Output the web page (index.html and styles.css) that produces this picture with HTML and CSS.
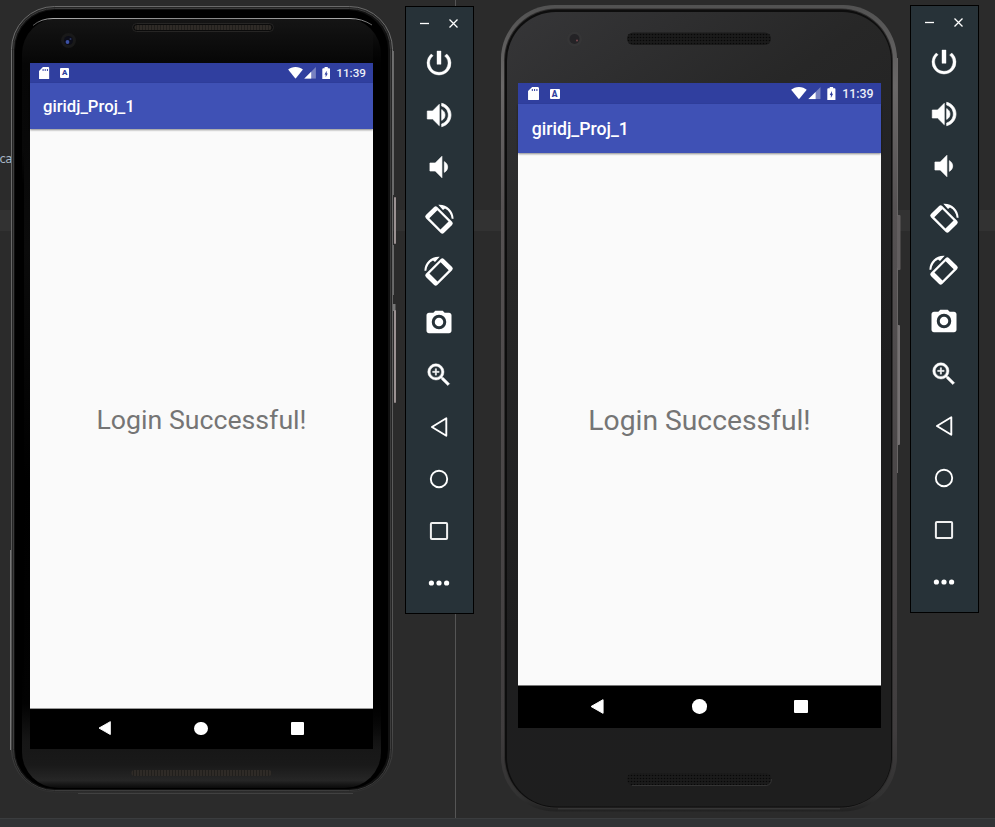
FILE: index.html
```html
<!DOCTYPE html>
<html lang="en">
<head>
<meta charset="utf-8">
<title>giridj_Proj_1</title>
<link rel="stylesheet" href="styles.css">
</head>
<body>
<svg class="defs" aria-hidden="true">
  <defs>
    <pattern id="mesh" width="3" height="3" patternUnits="userSpaceOnUse"><rect width="3" height="3" fill="#1b1b1b"/><circle cx="1.5" cy="1.5" r=".8" fill="#080808"/></pattern>
    <pattern id="mesh-warm" width="3" height="3" patternUnits="userSpaceOnUse"><rect width="3" height="3" fill="#2f2b27"/><rect x="1" width="1" height="3" fill="#211f1c"/></pattern>
    <linearGradient id="faceA" x1="0" y1="0" x2="0" y2="1">
      <stop offset="0" stop-color="#151515"/><stop offset=".06" stop-color="#060606"/><stop offset=".3" stop-color="#0b0b0b"/><stop offset=".6" stop-color="#000"/><stop offset=".89" stop-color="#020202"/><stop offset=".94" stop-color="#161616"/><stop offset=".97" stop-color="#191919"/><stop offset=".99" stop-color="#262626"/><stop offset="1" stop-color="#0a0a0a"/>
    </linearGradient>
    <linearGradient id="sideA" x1="0" y1="0" x2="0" y2="1">
      <stop offset="0" stop-color="#000" stop-opacity="0"/><stop offset=".06" stop-color="#000"/><stop offset=".92" stop-color="#000"/><stop offset="1" stop-color="#000" stop-opacity="0"/>
    </linearGradient>
    <linearGradient id="faceB" x1="0" y1="0" x2=".35" y2="1">
      <stop offset="0" stop-color="#363638"/><stop offset=".3" stop-color="#272727"/><stop offset=".7" stop-color="#1e1e1f"/><stop offset="1" stop-color="#1e1e1e"/>
    </linearGradient>
    <linearGradient id="rimB" x1="0" y1="0" x2="0" y2="1">
      <stop offset="0" stop-color="#525252"/><stop offset=".1" stop-color="#6a6868"/><stop offset=".25" stop-color="#565253"/><stop offset=".9" stop-color="#403d3e"/><stop offset=".98" stop-color="#323232"/><stop offset="1" stop-color="#222"/>
    </linearGradient>
    <linearGradient id="rimA" x1="0" y1="0" x2="0" y2="1">
      <stop offset="0" stop-color="#6a6a6a"/><stop offset=".06" stop-color="#707070"/><stop offset=".9" stop-color="#505050"/><stop offset="1" stop-color="#303030"/>
    </linearGradient>
    <linearGradient id="glint" x1="0" y1="0" x2="1" y2="0">
      <stop offset="0" stop-color="#555"/><stop offset=".05" stop-color="#aaa"/><stop offset=".5" stop-color="#868686"/><stop offset=".94" stop-color="#aaa"/><stop offset="1" stop-color="#666"/>
    </linearGradient>
    <symbol id="sd" viewBox="0 0 16 20"><path fill="#fff" fill-rule="evenodd" d="M14 0H6L0 6v12c0 1.1.9 2 2 2h12c1.1 0 2-.9 2-2V2c0-1.1-.9-2-2-2zM5.500 3h1.500v3h-1.500zM8.800 3h1.500v3h-1.500zM12.200 3h1.500v3h-1.500z"/></symbol>
    <symbol id="wifi" viewBox="0 0 24 19"><path fill="#fff" d="M12 19 24 4.2C21 1.9 16.9 0 12 0S3 1.9 0 4.2z"/></symbol>
    <symbol id="signal" viewBox="0 0 20 20"><path fill="#fff" fill-opacity=".35" d="M0 20h20V0z"/><path fill="#fff" d="M0 20h12V8z"/></symbol>
    <symbol id="battery" viewBox="0 0 12 20"><path fill="#fff" fill-rule="evenodd" d="M10.700 2H8.500V0h-5v2H1.300C.6 2 0 2.600 0 3.300v15.400c0 .7.6 1.300 1.300 1.300h9.400c.7 0 1.300-.6 1.300-1.300V3.300C12 2.600 11.400 2 10.700 2zM5.200 16v-4.200H3.500L6.800 5.800V10h1.700z"/></symbol>
    <symbol id="nav-back" viewBox="0 0 16 18"><path fill="#fff" d="M15.2.8v16.4L.8 9z" stroke="#fff" stroke-width="1.2" stroke-linejoin="round"/></symbol>
    <symbol id="power" viewBox="0 0 24 24"><path d="M13.5 3h-3v10h3zm4.3 2.200-1.600 1.600A6.900 6.900 0 0 1 12 19 7 7 0 0 1 7.600 6.600L6.200 5.200A9 9 0 1 0 17.800 5.200z" stroke="#fff" stroke-width=".3"/></symbol>
    <symbol id="vol-up" viewBox="0 0 24 24"><path stroke="#fff" stroke-width=".5" d="M3.200 9v6h4l5 5V4l-5 5h-4zm13.300 3c0-1.770-1.020-3.290-2.500-4.030v8.050c1.480-.73 2.500-2.250 2.500-4.020zM14 3.230v2.060c2.890.86 5 3.540 5 6.710s-2.110 5.850-5 6.710v2.060c4.010-.91 7-4.490 7-8.770s-2.990-7.860-7-8.770z"/></symbol>
    <symbol id="vol-down" viewBox="0 0 24 24"><path stroke="#fff" stroke-width=".5" d="M18.500 12c0-1.770-1.020-3.290-2.500-4.030v8.050c1.480-.73 2.500-2.250 2.500-4.020zM5.200 9v6h4l5 5V4l-5 5h-4z"/></symbol>
    <symbol id="rotate" viewBox="0 0 32 32"><path fill-rule="evenodd" transform="rotate(45 16 17)" d="M5.500 9h21a2.200 2.200 0 0 1 2.200 2.200v11.600a2.200 2.200 0 0 1-2.200 2.200h-21a2.200 2.200 0 0 1-2.200-2.200V11.200A2.200 2.200 0 0 1 5.500 9zM8 11.300v11.400h15.800V11.300z"/><path d="M15.300 1.800C23.500 1.200 30.300 7 30.600 15.800h-1.900C28.200 11.200 26 7.500 22 5.500l-2 1.600z"/></symbol>
    <symbol id="camera" viewBox="0 0 24 24"><circle cx="12" cy="12" r="3.400"/><path d="M9 3 7.500 4.500H4c-1.100 0-2 .9-2 2V19c0 1.100.9 2 2 2h16c1.100 0 2-.9 2-2V6.500c0-1.100-.9-2-2-2h-3.500L15 3H9zm3 14.800a5.800 5.800 0 1 1 0-11.600 5.800 5.800 0 0 1 0 11.600z" fill-rule="evenodd"/></symbol>
    <symbol id="zoom" viewBox="0 0 24 24"><path d="M15.500 14h-.79l-.28-.27A6.470 6.470 0 0 0 16 9.500 6.500 6.500 0 1 0 9.500 16c1.610 0 3.090-.59 4.230-1.570l.27.28v.79l5 4.990L20.490 19l-4.990-5zm-6 0C7.010 14 5 11.990 5 9.500S7.010 5 9.500 5 14 7.010 14 9.500 11.990 14 9.500 14zm2.600-4H10v2.100H9V10H6.900V9H9V6.900h1V9h2.100z" stroke="#fff" stroke-width=".35"/></symbol>
    <symbol id="back" viewBox="0 0 32 32"><path d="M23.300 7.200v17.600L8.900 16z" fill="none" stroke="#fff" stroke-width="1.900" stroke-linejoin="round"/></symbol>
    <symbol id="home" viewBox="0 0 32 32"><circle cx="16" cy="16" r="8.200" fill="none" stroke="#fff" stroke-width="1.900"/></symbol>
    <symbol id="recent" viewBox="0 0 32 32"><rect x="7.900" y="7.900" width="16.200" height="16.200" rx="1" fill="none" stroke="#f0f0f0" stroke-width="2"/></symbol>
    <symbol id="more" viewBox="0 0 32 32"><circle cx="8.400" cy="16" r="2.600"/><circle cx="16" cy="16" r="2.600"/><circle cx="23.600" cy="16" r="2.600"/></symbol>
  </defs>
</svg>

<main class="editor">
  <div class="caret-row"></div>
  <div class="guide"></div>
  <code class="code-bit">ca</code>
  <footer class="footer"></footer>

  <section class="phone phone-a">
    <svg class="shell" viewBox="10 5 388 790">
      <path d="M10.500 550v200" stroke="#777"/>
      <path d="M393.500 51v144M393.500 245v50" stroke="#6a6a6a"/>
      <rect x="394" y="197" width="2" height="47" rx="1" fill="#9b9192"/>
      <rect x="393" y="304" width="2.500" height="7" fill="#777"/>
      <rect x="394" y="310" width="2" height="93" rx="1" fill="#9b9192"/>
      <rect x="11.500" y="6.500" width="381" height="785.500" rx="43" fill="#252525" stroke="url(#rimA)"/>
      <rect x="13.500" y="8.500" width="377" height="782" rx="41" fill="#111" stroke="#3c3c3c"/>
      <rect x="15" y="10" width="373" height="779" rx="40" fill="#000"/>
      <rect x="22" y="18" width="359" height="770" rx="36" fill="url(#faceA)"/>
      <path d="M16 150h8v560h-8z" fill="url(#sideA)"/>
      <path d="M33 25.500Q41 18.500 53 18.500H350Q362 18.500 372 25" fill="none" stroke="url(#glint)"/>
      <path d="M373 30h15v720h-15z" fill="url(#sideA)"/>
      <circle cx="68.500" cy="40.500" r="7.500" fill="#191919"/><circle cx="68.500" cy="40.500" r="4.500" fill="#0c0d18"/>
      <circle cx="67.500" cy="42" r="1.900" fill="#3c51a5"/><circle cx="70.500" cy="39" r="1" fill="#29335f"/>
      <rect x="132.500" y="23.500" width="141" height="8" rx="4" fill="#0b0b0b" stroke="#262524"/>
      <rect x="134.500" y="25" width="137" height="5" rx="2.500" fill="url(#mesh-warm)"/>
      <rect x="131.500" y="770" width="140" height="6" rx="3" fill="url(#mesh-warm)"/>
      <path d="M78 793.500h275" stroke="#414141"/>
    </svg>
    <div class="screen">
      <div class="status">
        <svg class="i-sd"><use href="#sd"/></svg><span class="i-a">A</span>
        <svg class="i-wifi"><use href="#wifi"/></svg><svg class="i-signal"><use href="#signal"/></svg><svg class="i-battery"><use href="#battery"/></svg><span class="time">11:39</span>
      </div>
      <header class="appbar">giridj_Proj_1</header>
      <div class="content">Login Successful!</div>
      <nav class="nav"><svg class="n-back"><use href="#nav-back"/></svg><i class="n-home"></i><i class="n-recent"></i></nav>
    </div>
  </section>

  <aside class="tools tools-a">
    <div class="win"><svg viewBox="0 0 67 30"><path d="M14 16.500h9"/><path d="m43.500 12.500 8 8m0-8-8 8"/></svg></div>
    <svg class="t"><use href="#power"/></svg>
    <svg class="t"><use href="#vol-up"/></svg>
    <svg class="t"><use href="#vol-down"/></svg>
    <svg class="t"><use href="#rotate"/></svg>
    <svg class="t flip"><use href="#rotate"/></svg>
    <svg class="t cam"><use href="#camera"/></svg>
    <svg class="t mag"><use href="#zoom"/></svg>
    <svg class="t"><use href="#back"/></svg>
    <svg class="t"><use href="#home"/></svg>
    <svg class="t"><use href="#recent"/></svg>
    <svg class="t"><use href="#more"/></svg>
  </aside>

  <section class="phone phone-b">
    <svg class="shell" viewBox="500 4 402 810">
      <rect x="897" y="215" width="3.500" height="55" rx="1" fill="#625e5f"/>
      <rect x="897" y="325" width="3" height="120" rx="1" fill="#757172"/>
      <path d="M897.500 58v158M897.500 268v205" stroke="#686565"/>
      <rect x="501" y="5" width="396" height="806.500" rx="54" fill="url(#rimB)"/>
      <rect x="504" y="8.500" width="389" height="800" rx="52" fill="#2e2d2d"/>
      <rect x="505" y="9.500" width="387" height="798" rx="51" fill="#0d0d0d"/>
      <rect x="507" y="12" width="384" height="794.500" rx="49" fill="url(#faceB)"/>
      <path d="M558 808.800H840" stroke="#3c3c3c"/>
      <circle cx="574.500" cy="39" r="7.500" fill="#353536"/><circle cx="574.500" cy="39" r="5" fill="#242326"/><circle cx="577" cy="40.500" r="1" fill="#7b4a50"/>
      <rect x="627" y="32.500" width="144" height="12.500" rx="6" fill="url(#mesh)"/>
      <rect x="627" y="773" width="144.500" height="12.500" rx="6" fill="url(#mesh)"/>
      <path d="M632 785.500H766Q771.500 785 771.500 779" fill="none" stroke="#333"/>
    </svg>
    <div class="screen">
      <div class="status">
        <svg class="i-sd"><use href="#sd"/></svg><span class="i-a">A</span>
        <svg class="i-wifi"><use href="#wifi"/></svg><svg class="i-signal"><use href="#signal"/></svg><svg class="i-battery"><use href="#battery"/></svg><span class="time">11:39</span>
      </div>
      <header class="appbar">giridj_Proj_1</header>
      <div class="content">Login Successful!</div>
      <nav class="nav"><svg class="n-back"><use href="#nav-back"/></svg><i class="n-home"></i><i class="n-recent"></i></nav>
    </div>
  </section>

  <aside class="tools tools-b">
    <div class="win"><svg viewBox="0 0 67 30"><path d="M14 16.500h9"/><path d="m43.500 12.500 8 8m0-8-8 8"/></svg></div>
    <svg class="t"><use href="#power"/></svg>
    <svg class="t"><use href="#vol-up"/></svg>
    <svg class="t"><use href="#vol-down"/></svg>
    <svg class="t"><use href="#rotate"/></svg>
    <svg class="t flip"><use href="#rotate"/></svg>
    <svg class="t cam"><use href="#camera"/></svg>
    <svg class="t mag"><use href="#zoom"/></svg>
    <svg class="t"><use href="#back"/></svg>
    <svg class="t"><use href="#home"/></svg>
    <svg class="t"><use href="#recent"/></svg>
    <svg class="t"><use href="#more"/></svg>
  </aside>
</main>
</body>
</html>
```
FILE: styles.css
```css
* { box-sizing: border-box; }
body { margin: 0; background: #2b2b2b; font-family: Roboto, sans-serif; }
svg { display: block; }
.defs { position: absolute; width: 0; height: 0; }

.editor { position: relative; height: 827px; overflow: hidden; display: flex; flex-direction: column; }
.caret-row { margin-top: 210px; height: 21px; background: #323232; }
.footer { margin-top: auto; height: 9px; background: #313335; border-top: 1px solid #3a3c3e; }
.guide { position: absolute; left: 455px; top: 0; width: 1px; height: 818px; background: #555; }
.code-bit { position: absolute; left: -1px; top: 151px; font: 12px/16px "DejaVu Sans Mono", monospace; letter-spacing: -1px; color: #a9b7c6; }

/* --u is one density-independent pixel of the device */
.phone { position: absolute; }
.phone-a { --u: .8345px; left: 10px; top: 5px; width: 388px; height: 790px; padding: 58px 0 0 20px; }
.phone-b { --u: .8832px; left: 500px; top: 4px; width: 402px; height: 810px; padding: 79px 0 0 18px; }
.shell { position: absolute; inset: 0; width: 100%; height: 100%; }
.screen { position: relative; display: flex; flex-direction: column; background: #fafafa; }
.phone-a .screen { width: 343px; height: 686px; }
.phone-b .screen { width: 363px; height: 645px; }

.status { flex: none; height: calc(24 * var(--u)); background: #303f9f; display: flex; align-items: center; padding: 0 calc(8.500 * var(--u)) 0 calc(11.300 * var(--u)); color: #fff; }
.i-sd { width: calc(12.500 * var(--u)); height: calc(15.500 * var(--u)); }
.i-a { width: calc(11.500 * var(--u)); height: calc(11.500 * var(--u)); margin-left: calc(12 * var(--u)); background: #fff; color: #303f9f; border-radius: 1px; font-size: calc(9.500 * var(--u)); line-height: calc(11.500 * var(--u)); font-weight: 900; text-align: center; }
.i-wifi { width: calc(18 * var(--u)); height: calc(14 * var(--u)); margin-left: auto; }
.i-signal { width: calc(14.500 * var(--u)); height: calc(14 * var(--u)); margin-left: calc(1.500 * var(--u)); }
.i-battery { width: calc(10 * var(--u)); height: calc(15.500 * var(--u)); margin-left: calc(7 * var(--u)); }
.time { margin-left: calc(7 * var(--u)); font-size: calc(14 * var(--u)); font-weight: 500; color: #eceef7; }

.appbar { flex: none; position: relative; height: calc(55.500 * var(--u)); padding: calc(1 * var(--u)) 0 0 calc(15.500 * var(--u)); display: flex; align-items: center; background: #3f51b5; color: #fff; font-size: calc(20 * var(--u)); font-weight: 500; box-shadow: 0 1px 2px rgba(0, 0, 0, .45); }
.content { flex: 1; display: flex; align-items: center; justify-content: center; padding-top: 2px; color: #757575; font-size: calc(32 * var(--u)); }
.nav { flex: none; height: calc(48 * var(--u)); background: #000; display: flex; align-items: center; justify-content: center; gap: calc(99.500 * var(--u)); padding: 0 1px 1px 0; }
.phone-b .nav { border-top: 1px solid #777; height: 43px; }
.phone-a .nav { border-top: 1px solid #999; height: 41px; }
.n-back { width: calc(16 * var(--u)); height: calc(17 * var(--u)); }
.n-home { width: calc(16.500 * var(--u)); height: calc(16.500 * var(--u)); border-radius: 50%; background: #fff; }
.n-recent { width: calc(15.500 * var(--u)); height: calc(15.500 * var(--u)); border-radius: 1px; background: #fff; }

.tools { position: absolute; width: 69px; height: 608px; border: 1px solid #000; background: #273238; display: grid; grid-template: 30px repeat(11, 52px) / 66px; place-items: center; fill: #fff; }
.tools-a { left: 405px; top: 6px; }
.tools-b { left: 910px; top: 5px; }
.win { width: 66px; height: 30px; }
.win svg { width: 67px; height: 30px; }
.win path { fill: none; stroke: #fff; stroke-width: 1.300; }
.t { width: 32px; height: 32px; }
.flip { transform: scaleX(-1); }
.cam { width: 30px; height: 30px; margin-bottom: 2px; }
.mag { width: 30px; height: 30px; }
```
